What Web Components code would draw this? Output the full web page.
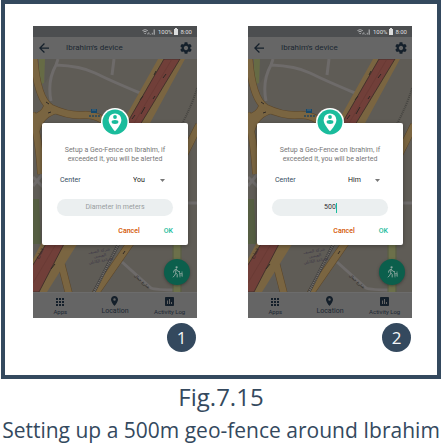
<!DOCTYPE html>
<html lang="en">
<head>
<meta charset="utf-8">
<meta name="viewport" content="width=device-width, initial-scale=1">
<title>Fig.7.15</title>
<style>
  html, body { margin: 0; background: #fff; overflow: hidden; }
  body { font-family: Roboto, "Liberation Sans", sans-serif; color: #34495e; }
</style>
</head>
<body>
<guide-figure>
  <phone-step step="1">
    <fence-dialog center="You"></fence-dialog>
  </phone-step>
  <phone-step step="2">
    <fence-dialog center="Him" diameter="500"></fence-dialog>
  </phone-step>
  <span slot="number">Fig.7.15</span>
  <span slot="title">Setting up a 500m geo-fence around Ibrahim</span>
</guide-figure>

<script>
const attach = (host, html) => {
  const t = document.createElement('template');
  t.innerHTML = html;
  host.attachShadow({ mode: 'open' }).append(t.content.cloneNode(true));
};

customElements.define('guide-figure', class extends HTMLElement {
  constructor() {
    super();
    attach(this, `
<style>
  :host { display: block; }
  figure { margin: 0 1px; }
  .frame { display: grid; grid-template-columns: 1fr 1fr; gap: 51px; align-items: start;
    border: 4px solid #34495e; padding: 22px 25px 23px 28px; }
  figcaption { display: flex; flex-direction: column; align-items: center;
    font-family: "Open Sans", "Noto Sans", sans-serif; white-space: nowrap; }
  .number { font-size: 24px; line-height: 36px; }
  .title { font-size: 21px; line-height: 30px; }
</style>
<figure>
  <div class="frame"><slot></slot></div>
  <figcaption>
    <div class="number"><slot name="number"></slot></div>
    <div class="title"><slot name="title"></slot></div>
  </figcaption>
</figure>`);
  }
});

customElements.define('phone-step', class extends HTMLElement {
  constructor() {
    super();
    attach(this, `
<style>
  :host { display: flex; flex-direction: column; gap: 5px; min-width: 0; }
  .phone { position: relative; display: flex; flex-direction: column; background: #5f5c56; }
  .modal { position: absolute; left: 9px; right: 9px; top: 97px; }
  .step { align-self: flex-end; width: 29px; height: 29px; border-radius: 50%; margin-right: 1px;
    background: #34495e; color: #f4f6f8; display: grid; place-items: center;
    font: 17px/29px "Open Sans", "Noto Sans", sans-serif; }
</style>
<div class="phone">
  <status-bar></status-bar>
  <app-header>Ibrahim's device</app-header>
  <street-map></street-map>
  <bottom-nav></bottom-nav>
  <div class="modal"><slot></slot></div>
</div>
<div class="step"></div>`);
  }
  connectedCallback() {
    this.shadowRoot.querySelector('.step').textContent = this.getAttribute('step');
  }
});

customElements.define('status-bar', class extends HTMLElement {
  constructor() {
    super();
    attach(this, `
<style>
  :host { display: flex; align-items: center; justify-content: flex-end; gap: 2px; height: 11px;
    padding-right: 5px; background: #4c4e50; color: #dedfdf; font-size: 6px; line-height: 11px; }
  svg { display: block; }
</style>
<svg width="14" height="6" viewBox="0 0 14 6" fill="none" stroke="#b4b6b7">
  <path d="M.4 1.6Q3 -.4 5.8 1.6M1.4 2.9Q3 1.8 4.6 2.9M2.4 4.1L3.2 4.9L4 4.1" stroke-width=".9"/>
  <path d="M5 5.3L7 3.6V5.5" stroke-width=".7"/>
  <path d="M8.6 5.5V5M10.3 5.5V3.8" stroke-width=".9"/><path d="M12.2 5.7V.5" stroke-width="1.1"/>
</svg>
<span>100%</span>
<svg width="4" height="7" viewBox="0 0 4 7" fill="#dcdddd"><path d="M1 0h2v1h1v6H0V1h1z"/></svg>
<span>8:00</span>`);
  }
});

customElements.define('app-header', class extends HTMLElement {
  constructor() {
    super();
    attach(this, `
<style>
  :host { display: flex; align-items: center; height: 22px; padding: 0 5px 0 6px; gap: 17px;
    background: #666; color: #1b2631; font-size: 8px; line-height: 22px; }
  button { all: unset; display: block; }
  svg { display: block; fill: #15202b; }
  .name { flex: 1; }
</style>
<button aria-label="Back"><svg width="10" height="10" viewBox="4 4 16 16"><path d="M20 11H7.83l5.59-5.59L12 4l-8 8 8 8 1.41-1.41L7.83 13H20v-2z"/></svg></button>
<span class="name"><slot></slot></span>
<button aria-label="Settings"><svg width="12" height="12" viewBox="2 2 20 20"><path d="M19.14 12.94c.04-.3.06-.61.06-.94 0-.32-.02-.64-.07-.94l2.03-1.58c.18-.14.23-.41.12-.61l-1.92-3.32c-.12-.22-.37-.29-.59-.22l-2.39.96c-.5-.38-1.03-.7-1.62-.94l-.36-2.54c-.04-.24-.24-.41-.48-.41h-3.84c-.24 0-.43.17-.47.41l-.36 2.54c-.59.24-1.13.57-1.62.94l-2.39-.96c-.22-.08-.47 0-.59.22L2.74 8.87c-.12.21-.08.47.12.61l2.03 1.58c-.05.3-.09.63-.09.94s.02.64.07.94l-2.03 1.58c-.18.14-.23.41-.12.61l1.92 3.32c.12.22.37.29.59.22l2.39-.96c.5.38 1.03.7 1.62.94l.36 2.54c.05.24.24.41.48.41h3.84c.24 0 .44-.17.47-.41l.36-2.54c.59-.24 1.13-.56 1.62-.94l2.39.96c.22.08.47 0 .59-.22l1.92-3.32c.12-.22.07-.47-.12-.61l-2.01-1.58zM12 15.6c-1.98 0-3.6-1.62-3.6-3.6s1.62-3.6 3.6-3.6 3.6 1.62 3.6 3.6-1.62 3.6-3.6 3.6z"/></svg></button>`);
  }
});

customElements.define('street-map', class extends HTMLElement {
  constructor() {
    super();
    attach(this, `
<style>
  :host { display: block; position: relative; aspect-ratio: 164 / 233; overflow: hidden; background: #5f5c56; }
  .map { display: block; width: 100%; height: 100%; }
  button { all: unset; position: absolute; right: 7px; bottom: 7px; width: 26px; height: 26px;
    border-radius: 50%; background: #0b5f4c; box-shadow: 0 1px 3px #2228; display: grid; place-items: center; }
  text { font-family: "DejaVu Sans", sans-serif; font-size: 4px; }
</style>
<svg class="map" viewBox="0 0 164 233" preserveAspectRatio="xMidYMid slice" fill="none" stroke-linejoin="round">
  <path fill="#5b5954" d="M12 0H24L17 16L12 24Z"/>
  <path fill="#666b45" d="M6 0H12L11 24L6 26Z"/>
  <path fill="#555e42" d="M0 140H6L8 185H0Z"/>
  <g stroke="#6e6b6a" stroke-width="3">
    <path d="M25 0L23 6Q14 22 18 42M23 6Q48 7 62 14T107 34M81 0L79 16"/>
    <path d="M0 127L12 112M0 118L12 130M154 144H164"/>
    <path d="M89 203L118 229Q122 231 145 231"/>
  </g>
  <path stroke="#6c704a" stroke-width="7" d="M144 186V233"/>
  <path stroke="#59603a" stroke-width=".8" d="M140 186V233M148 186V233"/>
  <g stroke="#5c4629" stroke-width="7.6">
    <path d="M1 -2Q4 40 18 49Q35 57 50 56T76 66"/>
    <path d="M-2 59Q10 58 14 48M-1 54Q6 80 8 115M24 51Q8 54 3 72"/>
    <path d="M166 66L150 98M98 183L62 235M38 186L27 202M26 196L36 235" />
  </g>
  <g stroke="#7a6541" stroke-width="6.6">
    <path d="M1 -2Q4 40 18 49Q35 57 50 56T76 66"/>
    <path d="M-2 59Q10 58 14 48M-1 54Q6 80 8 115M24 51Q8 54 3 72"/>
    <path d="M166 66L150 98M98 183L62 235M38 186L27 202M26 196L36 235" />
  </g>
  <path fill="#7a6541" d="M125 0H152L116 66L43 187L14 233H0V200L8 185L88 66Z"/>
  <path fill="#713f39" stroke="#382b28" stroke-width=".8" d="M131 0H147L107 66L31 185L6 233H-2V209L13 185L93 66Z"/>
  <path stroke="#653732" stroke-width=".6" d="M139 0L100 66M23 185L0 224"/>
  <g stroke="#2f2925" stroke-width="1">
    <path d="M123 12L121 16M133 15L130 19M110 37L107 41M102 56L99 60M112 48L108 55M22 205L18 210M92 192L90 195M13 43L16 45M15 54L18 53M122 37L120 40"/>
  </g>
  <path stroke="#414040" stroke-width="3" d="M86 184L60 235"/>
  <path stroke="#77736e" stroke-width="2" stroke-dasharray="1 1" d="M86 184L60 235"/>
  <path stroke="#454440" stroke-width="2" stroke-dasharray="1 1" d="M164 29Q160 44 148 67"/>
  <path fill="#17496b" d="M58 50h6v4h-6z"/><path stroke="#69777d" stroke-width=".8" d="M59 51h4"/>
  <path stroke="#26475d" stroke-width="1.4" stroke-dasharray="2 1" d="M56 57H68"/>
  <g fill="#3b3645" stroke="none" text-anchor="middle" transform="rotate(-10 67 197)">
    <text x="67" y="193">شركة الصيف</text><text x="67" y="198">العيسى</text><text x="67" y="203">لصناعة الكابلي</text>
  </g>
  <text fill="#292929" x="101" y="217" transform="rotate(42 101 217)" direction="ltr">شارع جمال</text>
  <text fill="#292321" x="5" y="200" transform="rotate(-59 5 200)">الشارع</text>
</svg>
<button aria-label="Walk">
  <svg width="11" height="12" viewBox="0 0 11 12" fill="none" stroke="#8ba79f" stroke-width="1" stroke-linecap="round">
    <circle cx="4.600" cy="1.300" r="1.100" fill="#8ba79f" stroke="none"/>
    <path d="M4.200 3.200L3.600 6.800L5.200 8.400V11M3.500 7.600L2.800 9.200L1.200 11M4 3.400L2 4.400L1.600 6.200M4.600 3.600L5.800 5.200L7.400 5.600"/>
    <path stroke-width=".7" d="M7.400 5.600L8 11M8 7.500h2.200v3M8.200 9h2M10 5.800v1.600"/>
  </svg>
</button>`);
  }
});

customElements.define('bottom-nav', class extends HTMLElement {
  constructor() {
    super();
    attach(this, `
<style>
  :host { display: block; background: #656565; border-top: 1px solid #6c6c6c; color: #1c2733; }
  nav { display: grid; grid-template-columns: repeat(3, 1fr); height: 25px; }
  a { color: inherit; text-decoration: none; display: flex; flex-direction: column; align-items: center;
    justify-content: flex-end; gap: 1px; padding-bottom: 2px; font-size: 6px; line-height: 9px; white-space: nowrap; }
  a.on { font-size: 7px; }
  svg { display: block; fill: #141f2a; }
</style>
<nav>
  <a href="#apps"><svg width="8" height="8" viewBox="0 0 8 8"><path d="M0 0h2v2H0zM3 0h2v2H3zM6 0h2v2H6zM0 3h2v2H0zM3 3h2v2H3zM6 3h2v2H6zM0 6h2v2H0zM3 6h2v2H3zM6 6h2v2H6z"/></svg>Apps</a>
  <a class="on" href="#location"><svg width="7" height="10" viewBox="5 2 14 20"><path d="M12 2C8.130 2 5 5.130 5 9c0 5.250 7 13 7 13s7-7.750 7-13c0-3.870-3.130-7-7-7zm0 9.500a2.500 2.500 0 0 1 0-5 2.500 2.500 0 0 1 0 5z"/></svg>Location</a>
  <a href="#log"><svg width="9" height="9" viewBox="3 3 18 18"><path d="M19 3H5c-1.100 0-2 .9-2 2v14c0 1.100.9 2 2 2h14c1.100 0 2-.9 2-2V5c0-1.100-.9-2-2-2zM9 17H7v-7h2v7zm4 0h-2V7h2v10zm4 0h-2v-4h2v4z"/></svg>Activity Log</a>
</nav>`);
  }
});

customElements.define('fence-dialog', class extends HTMLElement {
  constructor() {
    super();
    attach(this, `
<style>
  :host { display: block; position: relative; background: #fff; border-radius: 2px; box-shadow: 0 1px 4px #0005;
    padding: 23px 15px 9px; font-size: 7px; line-height: 9px; color: #777; }
  .pin { position: absolute; top: -15px; left: 50%; margin-left: -14px; width: 28px; height: 28px; display: block; }
  p { margin: 0; text-align: center; white-space: nowrap; display: flex; flex-direction: column; align-items: center; }
  .row { display: flex; justify-content: space-between; align-items: center; height: 12px; margin: 10px 8px 13px 3px; color: #34495e; }
  .pick { display: flex; align-items: center; color: #222; }
  select, input, button { all: unset; font: 7px/12px Roboto, "Liberation Sans", sans-serif; }
  select { width: 27px; color: #222; }
  .field { position: relative; display: flex; height: 17px; border-radius: 9px; background: #ebeff0; }
  input { flex: 1; min-width: 0; text-align: center; line-height: 17px; color: #333; }
  input::placeholder { color: #999d9f; opacity: 1; }
  .filled::after { content: ""; position: absolute; left: 50%; margin-left: 6px; top: 4px; width: 1px; height: 10px; background: #1abc9c; }
  .actions { display: flex; justify-content: flex-end; gap: 24px; margin-top: 10px; }
  button { font-weight: 500; line-height: 10px; }
  .cancel { color: #d35400; }
  .ok { color: #1abc9c; }
</style>
<svg class="pin" viewBox="0 0 28 28"><circle cx="14" cy="14" r="14" fill="#fff"/><circle cx="14" cy="14" r="12.500" fill="#1abc9c"/>
  <path fill="#fff" d="M14 5.500a6.400 6.400 0 0 0-6.400 6.400C7.600 16.500 14 23.200 14 23.200s6.400-6.700 6.400-11.300A6.400 6.400 0 0 0 14 5.500z"/>
  <circle cx="14" cy="9" r="1.900" fill="#1abc9c"/><ellipse cx="14" cy="14" rx="3.400" ry="1.900" fill="#1abc9c"/></svg>
<p><span>Setup a Geo-Fence on Ibrahim, if</span><span>exceeded it, you will be alerted</span></p>
<div class="row"><label for="center">Center</label>
  <span class="pick"><select id="center"><option>You</option><option>Him</option></select>
  <svg width="5" height="3" viewBox="0 0 5 3"><path fill="#777" d="M0 0h5L2.500 3z"/></svg></span></div>
<div class="field"><input type="text" inputmode="numeric" placeholder="Diameter in meters" aria-label="Diameter in meters"></div>
<div class="actions"><button class="cancel">Cancel</button><button class="ok">OK</button></div>`);
  }
  connectedCallback() {
    const root = this.shadowRoot;
    root.querySelector('select').value = this.getAttribute('center');
    const diameter = this.getAttribute('diameter');
    if (diameter) {
      root.querySelector('input').value = diameter;
      root.querySelector('.field').classList.add('filled');
    }
  }
});
</script>
</body>
</html>
